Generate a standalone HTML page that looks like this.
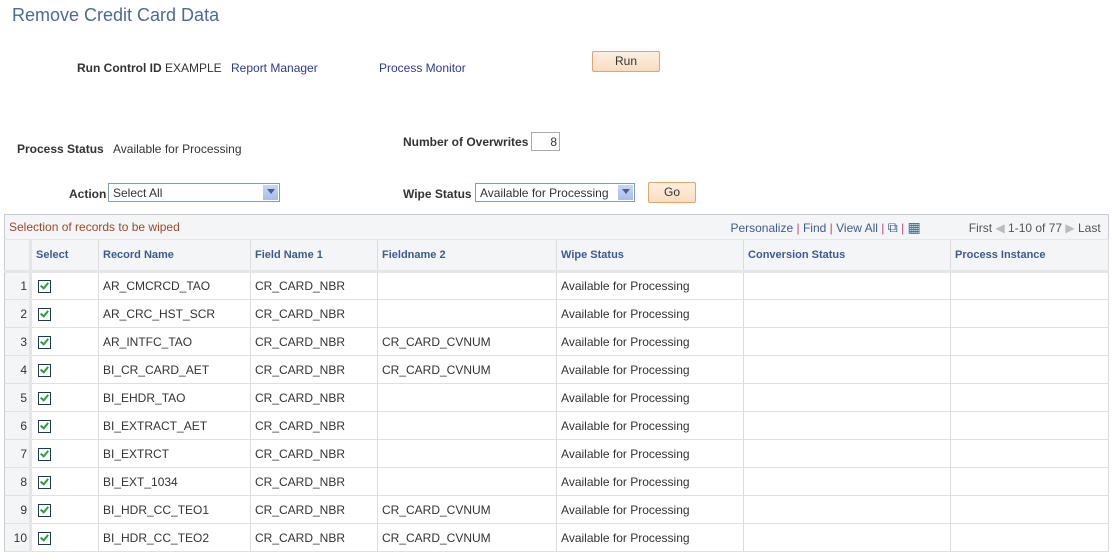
<!DOCTYPE html>
<html><head><style>
body{margin:0;width:1118px;height:559px;background:#fff;font-family:"Liberation Sans",Arial,sans-serif;font-size:12px;color:#333;position:relative;overflow:hidden}
.a{position:absolute;white-space:nowrap}
.lbl{font-weight:bold;color:#333}
.lnk{color:#2d3a8c}
.btn{position:absolute;background:linear-gradient(#fdf0e0,#f8dcc0);border:1px solid #e1a46d;border-radius:2px;text-align:center;color:#333}
.sel{position:absolute;border:1px solid #7f9db9;background:#fff;height:19px;box-sizing:border-box;padding:2px 4px}
.sel i{position:absolute;right:1px;top:1px;width:15px;height:15px;background:linear-gradient(#c6d6f5,#a8bdeb);}
.sel i:after{content:"";position:absolute;left:4px;top:4px;border:4px solid transparent;border-top:5px solid #4d6185}
table{position:absolute;left:4px;top:214px;width:1105px;border-collapse:collapse;border:1px solid #c8ccd2;table-layout:fixed}
td{height:27px;border-right:1px solid #dcdcdc;border-bottom:1px solid #e0e0e0;padding:0 4px;color:#333;font-size:12px;box-sizing:border-box;overflow:hidden;white-space:nowrap}
tr.h td{height:32px;font-weight:bold;color:#3e5b8f;font-size:11px;background:#f3f5f7;border-bottom:3px solid #e6e6e6;border-right:1px solid #dcdcdc}
tr.t td{height:25px;background:#f3f5f7;border-bottom:1px solid #e6e6e6}
tr.r td{height:28px}
td.n{text-align:right;padding:0 2px 0 0;background:#f3f5f7;border-right:3px solid #e3e5e8}
td.c{padding-left:6px}
.cb{display:inline-block;width:11px;height:11px;border:1px solid #1c3b5c;background:#fff;position:relative;vertical-align:middle}
.cb:after{content:"";position:absolute;left:3px;top:0px;width:3px;height:6px;border:solid #2aa02a;border-width:0 2px 2px 0;transform:rotate(40deg)}
</style></head><body>
<div class="a" style="left:12px;top:5px;font-size:18px;color:#4b6a96">Remove Credit Card Data</div>
<div class="a lbl" style="left:77px;top:61px">Run Control ID</div>
<div class="a" style="left:165px;top:61px">EXAMPLE</div>
<div class="a lnk" style="left:231px;top:61px">Report Manager</div>
<div class="a lnk" style="left:379px;top:61px">Process Monitor</div>
<div class="btn" style="left:592px;top:51px;width:66px;height:19px;line-height:19px">Run</div>
<div class="a lbl" style="left:403px;top:135px">Number of Overwrites</div>
<div class="a" style="left:531px;top:132px;width:29px;height:19px;border:1px solid #aaa;text-align:right;line-height:19px;padding-right:2px;box-sizing:border-box">8</div>
<div class="a lbl" style="left:17px;top:142px">Process Status</div>
<div class="a" style="left:113px;top:142px">Available for Processing</div>
<div class="a lbl" style="left:69px;top:187px">Action</div>
<div class="sel" style="left:108px;top:183px;width:172px">Select All<i></i></div>
<div class="a lbl" style="left:403px;top:187px">Wipe Status</div>
<div class="sel" style="left:475px;top:183px;width:160px">Available for Processing<i></i></div>
<div class="btn" style="left:648px;top:182px;width:46px;height:19px;line-height:19px">Go</div>
<table>
<colgroup><col style="width:26px"><col style="width:68px"><col style="width:152px"><col style="width:127px"><col style="width:179px"><col style="width:187px"><col style="width:207px"><col></colgroup>
<tr class="t"><td colspan="5" style="color:#9a4b2a;font-size:12px;border-right:none">Selection of records to be wiped</td><td colspan="3" style="border-right:none;text-align:right;font-size:12px;color:#555"><span style="color:#3e5b8f">Personalize</span> <span style="color:#c04a6a">|</span> <span style="color:#3e5b8f">Find</span> <span style="color:#c04a6a">|</span> <span style="color:#3e5b8f">View All</span> <span style="color:#c04a6a">|</span> <span style="color:#3e5b8f;font-size:14px">⧉</span> <span style="color:#c04a6a">|</span> <span style="color:#3e5b8f;font-size:14px">▦</span><span style="display:inline-block;width:48px"></span>First <span style="color:#bbb">◀</span> 1-10 of 77 <span style="color:#bbb">▶</span> Last&nbsp;</td></tr>
<tr class="h"><td style="background:#f3f5f7;border-right:3px solid #e3e5e8"></td><td>Select</td><td>Record Name</td><td>Field Name 1</td><td>Fieldname 2</td><td>Wipe Status</td><td>Conversion Status</td><td>Process Instance</td></tr>
<tr class="r"><td class="n">1</td><td class="c"><span class="cb"></span></td><td>AR_CMCRCD_TAO</td><td>CR_CARD_NBR</td><td></td><td>Available for Processing</td><td></td><td></td></tr>
<tr class="r"><td class="n">2</td><td class="c"><span class="cb"></span></td><td>AR_CRC_HST_SCR</td><td>CR_CARD_NBR</td><td></td><td>Available for Processing</td><td></td><td></td></tr>
<tr class="r"><td class="n">3</td><td class="c"><span class="cb"></span></td><td>AR_INTFC_TAO</td><td>CR_CARD_NBR</td><td>CR_CARD_CVNUM</td><td>Available for Processing</td><td></td><td></td></tr>
<tr class="r"><td class="n">4</td><td class="c"><span class="cb"></span></td><td>BI_CR_CARD_AET</td><td>CR_CARD_NBR</td><td>CR_CARD_CVNUM</td><td>Available for Processing</td><td></td><td></td></tr>
<tr class="r"><td class="n">5</td><td class="c"><span class="cb"></span></td><td>BI_EHDR_TAO</td><td>CR_CARD_NBR</td><td></td><td>Available for Processing</td><td></td><td></td></tr>
<tr class="r"><td class="n">6</td><td class="c"><span class="cb"></span></td><td>BI_EXTRACT_AET</td><td>CR_CARD_NBR</td><td></td><td>Available for Processing</td><td></td><td></td></tr>
<tr class="r"><td class="n">7</td><td class="c"><span class="cb"></span></td><td>BI_EXTRCT</td><td>CR_CARD_NBR</td><td></td><td>Available for Processing</td><td></td><td></td></tr>
<tr class="r"><td class="n">8</td><td class="c"><span class="cb"></span></td><td>BI_EXT_1034</td><td>CR_CARD_NBR</td><td></td><td>Available for Processing</td><td></td><td></td></tr>
<tr class="r"><td class="n">9</td><td class="c"><span class="cb"></span></td><td>BI_HDR_CC_TEO1</td><td>CR_CARD_NBR</td><td>CR_CARD_CVNUM</td><td>Available for Processing</td><td></td><td></td></tr>
<tr class="r"><td class="n">10</td><td class="c"><span class="cb"></span></td><td>BI_HDR_CC_TEO2</td><td>CR_CARD_NBR</td><td>CR_CARD_CVNUM</td><td>Available for Processing</td><td></td><td></td></tr>
</table>
</body></html>
